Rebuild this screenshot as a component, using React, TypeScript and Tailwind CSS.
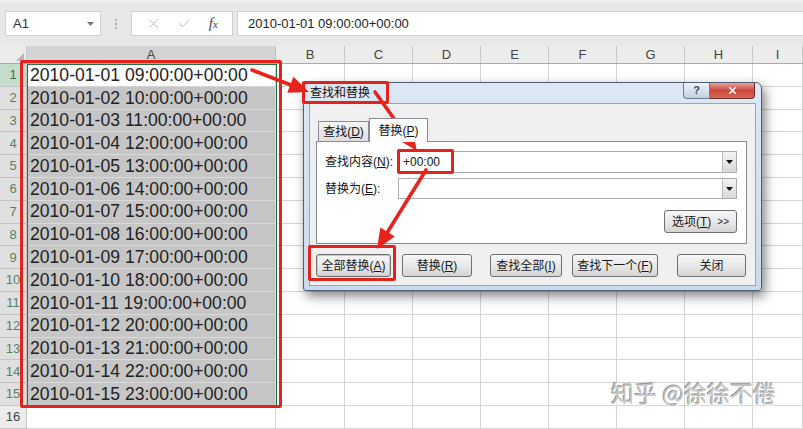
import { X, Check } from "lucide-react";

const pad = (n: number) => String(n).padStart(2, "0");

const values = Array.from({ length: 15 }, (_, i) => `2010-01-${pad(i + 1)} ${pad(i + 9)}:00:00+00:00`);

const otherCols = ["B", "C", "D", "E", "F", "G", "H", "I"];

function Arrow({ x1, y1, x2, y2 }: { x1: number; y1: number; x2: number; y2: number }) {
  // arrow head computed from line direction
  const dx = x2 - x1;
  const dy = y2 - y1;
  const len = Math.hypot(dx, dy);
  const ux = dx / len;
  const uy = dy / len;
  const L = 20;
  const W = 8.5;
  const bx = x2 - ux * L;
  const by = y2 - uy * L;
  const pts = `${x2},${y2} ${bx - uy * W},${by + ux * W} ${bx + uy * W},${by - ux * W}`;
  return (
    <g>
      <line x1={x1} y1={y1} x2={bx + ux * 2} y2={by + uy * 2} stroke="#e8231b" strokeWidth={3.6} strokeLinecap="round" />
      <polygon points={pts} fill="#e8231b" />
    </g>
  );
}

function DropBtn() {
  return (
    <div className="w-[14px] h-full border-l border-[#b8bcc4] bg-linear-to-b from-[#f4f4f4] to-[#d9d9d9] flex items-center justify-center">
      <svg width="7" height="4" viewBox="0 0 7 4">
        <polygon points="0,0 7,0 3.5,4" fill="#111" />
      </svg>
    </div>
  );
}

function Btn({ children, className = "" }: { children: React.ReactNode; className?: string }) {
  return (
    <div
      className={`h-[23px] rounded-[3px] border border-[#707070] bg-linear-to-b from-[#f6f6f6] via-[#e9e9e9] to-[#d4d4d4] flex items-center justify-center text-[12px] text-[#1a1a1a] ${className}`}
    >
      {children}
    </div>
  );
}

export default function App() {
  return (
    <div className="relative w-[803px] h-[429px] overflow-hidden bg-white font-['Liberation_Sans','Noto_Sans_CJK_SC',sans-serif]">
      {/* formula bar */}
      <div className="h-[46px] bg-[#e8e8e8] border-t-[3px] border-[#f0f0f0] flex items-start pt-[8px]">
        <div className="ml-[5px] w-[96px] h-[25px] bg-white border border-[#d0d0d0] flex items-center justify-between pl-[7px] pr-[6px] text-[13px] text-[#333]">
          <span>A1</span>
          <svg width="7" height="4" viewBox="0 0 7 4">
            <polygon points="0,0 7,0 3.5,4" fill="#777" />
          </svg>
        </div>
        <div className="w-[30px] h-[25px] flex items-center justify-center">
          <div className="flex flex-col gap-[2px]">
            <span className="w-[2px] h-[2px] bg-[#b0b0b0]" />
            <span className="w-[2px] h-[2px] bg-[#b0b0b0]" />
            <span className="w-[2px] h-[2px] bg-[#b0b0b0]" />
          </div>
        </div>
        <div className="w-[102px] h-[25px] bg-white border border-[#d0d0d0] flex items-center justify-around px-[6px]">
          <X size={15} strokeWidth={1.4} color="#b5b5b5" />
          <Check size={15} strokeWidth={1.4} color="#b5b5b5" />
          <span className="font-['Liberation_Serif',serif] italic text-[15px] text-[#444] leading-none">
            f<span className="text-[11px]">x</span>
          </span>
        </div>
        <div className="ml-[4px] flex-1 h-[25px] bg-white border border-[#d0d0d0] border-r-0 flex items-center pl-[10px] text-[13px] text-[#222]">
          2010-01-01 09:00:00+00:00
        </div>
      </div>

      {/* column headers */}
      <div className="flex h-[18px] bg-[#ececec] border-b border-[#ababab] text-[13px] text-[#444]">
        <div className="w-[27px] border-r border-[#c8c8c8] flex items-end justify-end pr-[2px] pb-[2px]">
          <svg width="8" height="8" viewBox="0 0 8 8">
            <polygon points="8,0 8,8 0,8" fill="#b5b5b5" />
          </svg>
        </div>
        <div className="w-[249px] bg-[#d4d4d4] border-r border-[#c0c0c0] flex items-center justify-center">A</div>
        {otherCols.map((c, i) => (
          <div
            key={c}
            className={`${i === 0 ? "w-[69px]" : i === 7 ? "flex-1" : "w-[68px]"} border-r border-[#c8c8c8] flex items-center justify-center`}
          >
            {c}
          </div>
        ))}
      </div>

      {/* rows */}
      {Array.from({ length: 16 }, (_, r) => {
        const n = r + 1;
        const sel = n <= 15;
        return (
          <div key={n} className={`flex ${n === 16 ? "h-[23px]" : "h-[22.8px]"}`}>
            <div
              className={`w-[27px] border-r border-b border-[#c4c4c4] flex items-center justify-center text-[13px] ${
                n === 1 ? "bg-[#c3dccb] text-[#3d6b4c]" : sel ? "bg-[#e0e0e0] text-[#5b7d66]" : "bg-[#ececec] text-[#444]"
              }`}
            >
              {n}
            </div>
            <div
              className={`w-[249px] border-r border-b flex items-center pl-[3px] text-[17.6px] text-[#222] whitespace-nowrap ${
                n === 1 ? "bg-white border-[#d4d4d4]" : sel ? "bg-[#c6c6c6] border-[#dadada]" : "bg-white border-[#d4d4d4]"
              }`}
            >
              {sel ? values[r] : ""}
            </div>
            {otherCols.map((c, i) => (
              <div
                key={c}
                className={`${i === 0 ? "w-[69px]" : i === 7 ? "flex-1" : "w-[68px]"} border-r border-b border-[#d4d4d4]`}
              />
            ))}
          </div>
        );
      })}

      {/* selection outline */}
      <div className="absolute left-[27px] top-[64px] w-[250px] h-[342px] border border-[#217346]" />

      {/* find & replace dialog */}
      <div className="absolute left-[303px] top-[82px] w-[459px] h-[209px] rounded-t-[6px] rounded-b-[3px] border border-[#4f6075] bg-linear-to-b from-[#dde8f5] to-[#cbdaec] shadow-[3px_5px_12px_rgba(0,0,0,0.5)] flex flex-col text-[#111]">
        <div className="h-[20px] flex items-start justify-between pl-[6px] pr-[6px]">
          <span className="mt-[4px] text-[12px] leading-none">查找和替换</span>
          <div className="flex">
            <div className="w-[27px] h-[16px] rounded-bl-[4px] border border-t-0 border-[#6d7d92] bg-linear-to-b from-[#eef3f9] to-[#c3d0e0] flex items-center justify-center text-[11px] font-bold text-[#3c4a5c] leading-none">
              ?
            </div>
            <div className="w-[45px] h-[16px] rounded-br-[4px] border border-t-0 border-l-0 border-[#6e2c26] bg-linear-to-b from-[#e5a198] via-[#c9473b] to-[#d7665a] flex items-center justify-center">
              <X size={11} strokeWidth={3.5} color="#fff" />
            </div>
          </div>
        </div>
        <div className="mx-[5px] mb-[4px] flex-1 bg-[#f0f0f0] border border-[#97a8bb] px-[6px] pt-[13px] flex flex-col">
          <div className="flex items-end h-[24px] ml-[2px] text-[12px]">
            <div className="w-[51px] h-[20px] border border-b-0 border-[#898c95] bg-linear-to-b from-[#f4f4f4] to-[#dedede] flex items-center justify-center">
              查找(<u>D</u>)
            </div>
            <div className="w-[59px] h-[24px] -mb-[1px] z-10 border border-b-0 border-[#898c95] bg-white flex items-center justify-center">
              替换(<u>P</u>)
            </div>
          </div>
          <div className="w-[431px] h-[103px] bg-white border border-[#898c95] pt-[9px] pl-[8px] pr-[9px] flex flex-col text-[12px]">
            <div className="flex items-center h-[22px]">
              <span className="w-[73px]">
                查找内容(<u>N</u>):
              </span>
              <div className="flex-1 h-full border border-[#abadb3] flex">
                <span className="flex-1 pl-[4px] flex items-center text-[12px] font-['Liberation_Sans',sans-serif]">+00:00</span>
                <DropBtn />
              </div>
            </div>
            <div className="flex items-center h-[21px] mt-[5px]">
              <span className="w-[73px]">
                替换为(<u>E</u>):
              </span>
              <div className="flex-1 h-full border border-[#abadb3] flex">
                <span className="flex-1" />
                <DropBtn />
              </div>
            </div>
            <div className="flex justify-end mt-[11px]">
              <Btn className="w-[73px] gap-[6px]">
                <span>
                  选项(<u>T</u>)
                </span>
                <span className="text-[10px]">&gt;&gt;</span>
              </Btn>
            </div>
          </div>
          <div className="flex mt-[10px]">
            <Btn className="w-[75px] border-[#3c7fb1] ring-1 ring-inset ring-[#9fd5f5]">
              全部替换(<u>A</u>)
            </Btn>
            <Btn className="w-[70px] ml-[11px]">
              替换(<u>R</u>)
            </Btn>
            <Btn className="w-[72px] ml-[18px]">
              查找全部(<u>I</u>)
            </Btn>
            <Btn className="w-[86px] ml-[10px]">
              查找下一个(<u>F</u>)
            </Btn>
            <Btn className="w-[69px] ml-[19px]">关闭</Btn>
          </div>
        </div>
      </div>

      {/* red annotation boxes */}
      <div className="absolute left-[20px] top-[60px] w-[262px] h-[348px] border-[3px] border-[#e3231b] rounded-[2px]" />
      <div className="absolute left-[302px] top-[81px] w-[87px] h-[23px] border-[3px] border-[#e3231b] rounded-[2px]" />
      <div className="absolute left-[397px] top-[149px] w-[57px] h-[25px] border-[3px] border-[#e3231b] rounded-[2px]" />
      <div className="absolute left-[308px] top-[245px] w-[88px] h-[36px] border-[3px] border-[#e3231b] rounded-[2px]" />

      {/* arrows */}
      <svg className="absolute left-0 top-0 pointer-events-none" width="803" height="429">
        <Arrow x1={252} y1={70} x2={309} y2={92} />
        <Arrow x1={375} y1={92} x2={417} y2={151} />
        <Arrow x1={426} y1={170} x2={377} y2={249} />
      </svg>

      {/* watermark */}
      <div className="absolute left-[611px] top-[381px] text-[23px] leading-none text-[#c4c4c4] font-['Noto_Sans_CJK_SC',sans-serif] [text-shadow:1px_1px_0_#fff,-1px_-1px_0_#9a9a9a] whitespace-nowrap">
        知乎 @徐徐不倦
      </div>
    </div>
  );
}
